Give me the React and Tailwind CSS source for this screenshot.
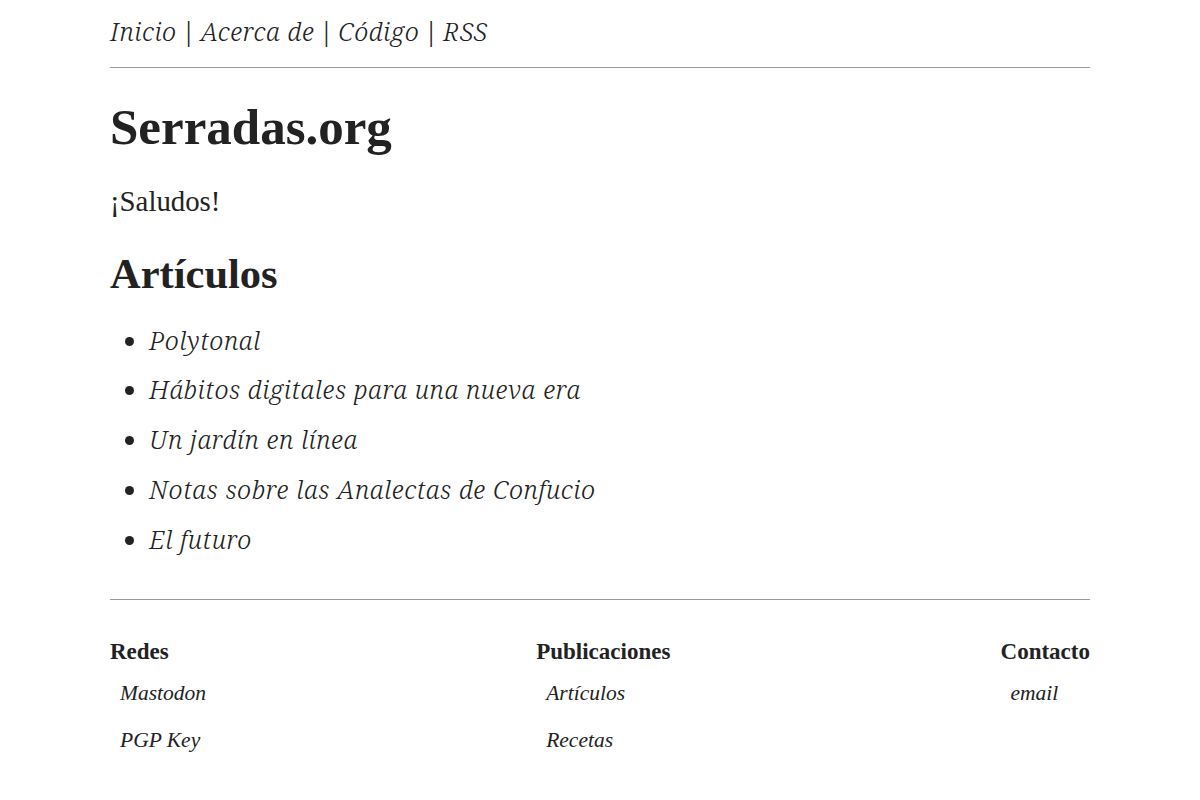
import React from "react";

const navLinks = ["Inicio", "Acerca de", "Código", "RSS"];

const articles = [
  "Polytonal",
  "Hábitos digitales para una nueva era",
  "Un jardín en línea",
  "Notas sobre las Analectas de Confucio",
  "El futuro",
];

const footer = [
  { title: "Redes", links: ["Mastodon", "PGP Key"] },
  { title: "Publicaciones", links: ["Artículos", "Recetas"] },
  { title: "Contacto", links: ["email"] },
];

function ItalicLink({ children }) {
  return (
    <a
      href="#"
      className="italic font-light tracking-[0.55px] text-[25.6px] font-['Noto_Serif',serif]"
    >
      {children}
    </a>
  );
}

export default function App() {
  return (
    <div className="min-h-screen bg-white text-[#222] font-['Liberation_Serif',serif] text-[28.8px]">
      <div className="w-[980px] mx-auto">
        <nav className="pt-[10px] h-[53px] leading-[42px]">
          {navLinks.map((l, i) => (
            <React.Fragment key={l}>
              {i > 0 && <span className="mx-[1.8px]"> | </span>}
              <ItalicLink>{l}</ItalicLink>
            </React.Fragment>
          ))}
        </nav>
        <hr className="mt-[14px] border-0 border-t border-[#999]" />

        <main>
          <h1 className="mt-[34px] font-bold text-[51px] leading-none">Serradas.org</h1>
          <p className="mt-[27px] leading-[1.5]">¡Saludos!</p>

          <h2 className="mt-[30px] font-bold text-[42.5px] leading-none">Artículos</h2>
          <ul className="mt-[20px] pl-[39px] list-disc leading-[49.7px]">
            {articles.map((a) => (
              <li key={a}>
                <ItalicLink>{a}</ItalicLink>
              </li>
            ))}
          </ul>
        </main>

        <hr className="mt-[35px] border-0 border-t border-[#999]" />

        <footer className="flex justify-between pt-[36px] pb-8">
          {footer.map((col) => (
            <div key={col.title}>
              <h3 className="font-bold text-[23px] leading-[32px]">{col.title}</h3>
              <ul className="pl-[10px] text-[21.5px] italic leading-[47px] mt-[2px]">
                {col.links.map((l) => (
                  <li key={l}>
                    <a href="#">{l}</a>
                  </li>
                ))}
              </ul>
            </div>
          ))}
        </footer>
      </div>
    </div>
  );
}
